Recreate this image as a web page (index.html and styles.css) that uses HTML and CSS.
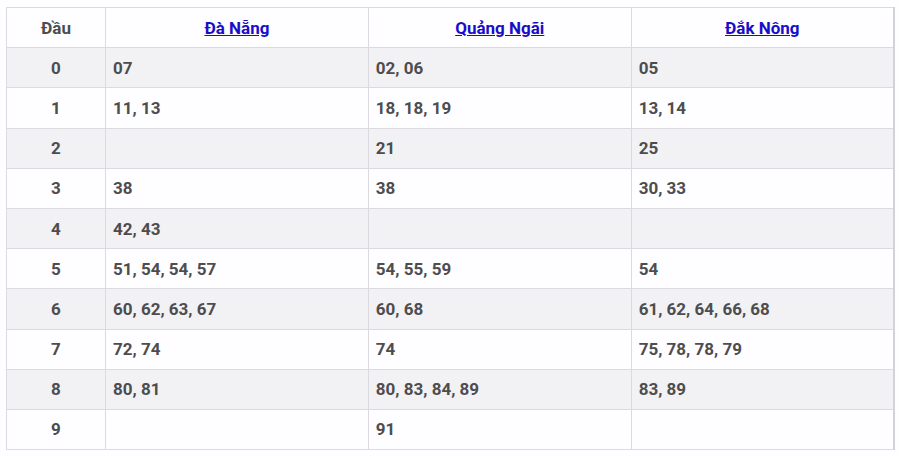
FILE: index.html
```html
<!DOCTYPE html>
<html lang="vi">
<head>
<meta charset="utf-8">
<title>Lô tô đầu</title>
<link rel="stylesheet" href="styles.css">
</head>
<body>
<div class="wrap">
<table class="loto">
<thead>
<tr><th class="dau">Đầu</th><th><a href="#">Đà Nẵng</a></th><th><a href="#">Quảng Ngãi</a></th><th><a href="#">Đắk Nông</a></th></tr>
</thead>
<tbody>
<tr><td class="dau">0</td><td>07</td><td>02, 06</td><td>05</td></tr>
<tr><td class="dau">1</td><td>11, 13</td><td>18, 18, 19</td><td>13, 14</td></tr>
<tr><td class="dau">2</td><td></td><td>21</td><td>25</td></tr>
<tr><td class="dau">3</td><td>38</td><td>38</td><td>30, 33</td></tr>
<tr><td class="dau">4</td><td>42, 43</td><td></td><td></td></tr>
<tr><td class="dau">5</td><td>51, 54, 54, 57</td><td>54, 55, 59</td><td>54</td></tr>
<tr><td class="dau">6</td><td>60, 62, 63, 67</td><td>60, 68</td><td>61, 62, 64, 66, 68</td></tr>
<tr><td class="dau">7</td><td>72, 74</td><td>74</td><td>75, 78, 78, 79</td></tr>
<tr><td class="dau">8</td><td>80, 81</td><td>80, 83, 84, 89</td><td>83, 89</td></tr>
<tr><td class="dau">9</td><td></td><td>91</td><td></td></tr>
</tbody>
</table>
</div>
</body>
</html>
```
FILE: styles.css
```css
html, body {
  margin: 0;
  background: #fefdff;
}
.wrap {
  padding: 7px 5px 0 6px;
}
.loto {
  width: 889px;
  border-collapse: collapse;
  table-layout: fixed;
  font-family: Roboto, "Noto Sans", sans-serif;
  font-size: 17px;
  font-weight: 700;
  color: #4d4d4f;
}
.loto th, .loto td {
  border: 1px solid #dcd9df;
  height: 40.2px;
  padding: 0 7px;
  text-align: left;
  vertical-align: middle;
  box-sizing: border-box;
}
.loto th {
  text-align: center;
  font-weight: 700;
}
.loto th.dau, .loto td.dau {
  width: 99px;
  text-align: center;
}
.loto th a {
  color: #1a0dc8;
  text-decoration: underline;
}
.loto tbody tr:nth-child(odd) td {
  background: #f2f1f3;
}
.loto tr > *:last-child {
  border-right: 2px solid #d4d2d6;
}
```
